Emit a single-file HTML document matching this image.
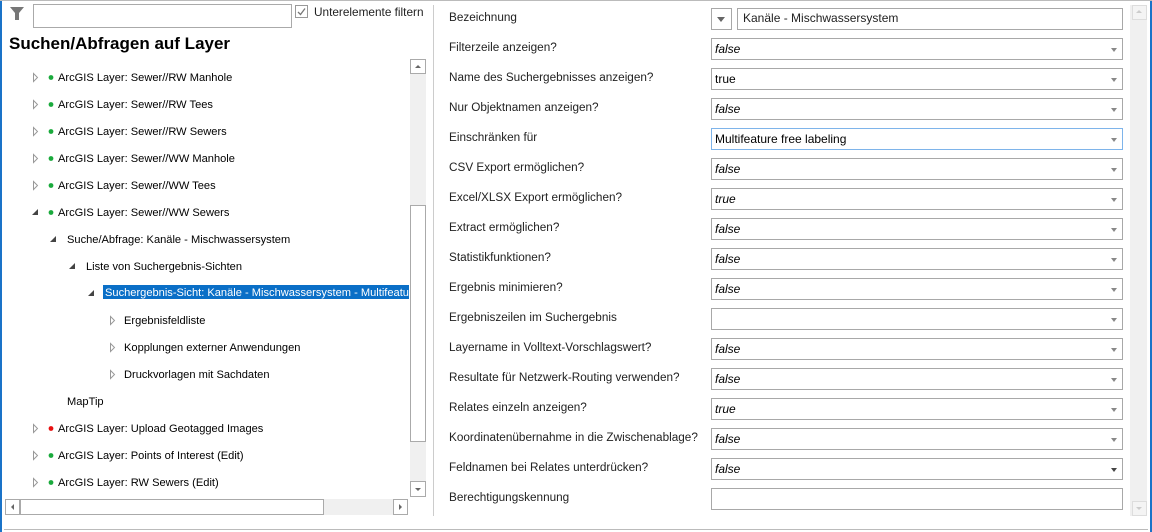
<!DOCTYPE html>
<html><head><meta charset="utf-8"><style>
*{margin:0;padding:0;box-sizing:border-box}
body{width:1152px;height:532px;background:#fff;position:relative;overflow:hidden;font-family:"Liberation Sans",sans-serif;font-size:12px;color:#000}
.a{position:absolute}
.t{position:absolute;white-space:nowrap;line-height:14px;font-size:11.1px}
.tr .t{margin-top:1px}
.box{position:absolute;left:711px;width:412px;height:22px;border:1px solid #a8a8a8;background:#fff}
.box span{position:absolute;left:3px;top:3px;line-height:14px}
.box i{font-style:italic}
.dd{position:absolute;right:5px;top:9px;border-left:3px solid transparent;border-right:3px solid transparent;border-top:4px solid #888}
.lbl{position:absolute;left:449px;white-space:nowrap;line-height:14px;color:#222;font-size:11.75px;margin-top:1px}
</style></head><body>
<div class="a" style="left:0;top:0;width:2px;height:532px;background:#1a73c8"></div>
<div class="a" style="right:0;top:0;width:2px;height:532px;background:#1a73c8"></div>
<div class="a" style="left:0;top:0;width:1152px;height:1px;background:#bbb"></div>
<div class="a" style="left:4px;top:529px;width:1144px;height:1px;background:#bbb"></div>
<svg class="a" style="left:9px;top:6px" width="16" height="16"><path d="M1 1H15L10 7V14H6V7Z" fill="#777"/></svg>
<div class="a" style="left:33px;top:4px;width:259px;height:24px;border:1px solid #aaa"></div>
<div class="a" style="left:295px;top:5px;width:13px;height:13px;border:1px solid #999"></div>
<svg class="a" style="left:296px;top:6px" width="11" height="11"><path d="M2 6L4.5 8.5L9 2.5" stroke="#777" stroke-width="1.3" fill="none"/></svg>
<div class="t" style="left:314px;top:5px;color:#222;font-size:11.8px">Unterelemente filtern</div>
<div class="t" style="left:9px;top:34px;font-size:17px;font-weight:bold;line-height:20px">Suchen/Abfragen auf Layer</div>
<div class="tr">
<div class="t" style="left:58px;top:70px">ArcGIS Layer: Sewer//RW Manhole</div>
<div class="t" style="left:58px;top:97px">ArcGIS Layer: Sewer//RW Tees</div>
<div class="t" style="left:58px;top:124px">ArcGIS Layer: Sewer//RW Sewers</div>
<div class="t" style="left:58px;top:151px">ArcGIS Layer: Sewer//WW Manhole</div>
<div class="t" style="left:58px;top:178px">ArcGIS Layer: Sewer//WW Tees</div>
<div class="t" style="left:58px;top:205px">ArcGIS Layer: Sewer//WW Sewers</div>
<div class="t" style="left:67px;top:232px">Suche/Abfrage: Kanäle - Mischwassersystem</div>
<div class="t" style="left:86px;top:259px">Liste von Suchergebnis-Sichten</div>
<div class="a" style="left:103px;top:285px;width:306px;height:14px;background:#0a6fc7"></div>
<div class="t" style="left:105px;top:285px;width:304px;overflow:hidden;color:#fff">Suchergebnis-Sicht: Kanäle - Mischwassersystem - Multifeature free labeling</div>
<div class="t" style="left:124px;top:313px">Ergebnisfeldliste</div>
<div class="t" style="left:124px;top:340px">Kopplungen externer Anwendungen</div>
<div class="t" style="left:124px;top:367px">Druckvorlagen mit Sachdaten</div>
<div class="t" style="left:67px;top:394px">MapTip</div>
<div class="t" style="left:58px;top:421px">ArcGIS Layer: Upload Geotagged Images</div>
<div class="t" style="left:58px;top:448px">ArcGIS Layer: Points of Interest (Edit)</div>
<div class="t" style="left:58px;top:475px">ArcGIS Layer: RW Sewers (Edit)</div>
</div>
<svg class="a" style="left:0;top:60px" width="130" height="440">
<g fill="#fff" stroke="#999" stroke-width="1">
<path d="M33.5 13.5V21.5L37.5 17.5Z"/><path d="M33.5 40.5V48.5L37.5 44.5Z"/><path d="M33.5 67.5V75.5L37.5 71.5Z"/>
<path d="M33.5 94.5V102.5L37.5 98.5Z"/><path d="M33.5 121.5V129.5L37.5 125.5Z"/>
<path d="M110.5 256.5V264.5L114.5 260.5Z"/><path d="M110.5 283.5V291.5L114.5 287.5Z"/><path d="M110.5 310.5V318.5L114.5 314.5Z"/>
<path d="M33.5 364.5V372.5L37.5 368.5Z"/><path d="M33.5 391.5V399.5L37.5 395.5Z"/><path d="M33.5 418.5V426.5L37.5 422.5Z"/>
</g>
<g fill="#444">
<path d="M32 155H38V149Z"/><path d="M50 182H56V176Z"/><path d="M69 209H75V203Z"/><path d="M88 236H94V230Z"/>
</g>
<g fill="#1aaa3c">
<circle cx="51" cy="17.5" r="2.4"/><circle cx="51" cy="44.5" r="2.4"/><circle cx="51" cy="71.5" r="2.4"/><circle cx="51" cy="98.5" r="2.4"/><circle cx="51" cy="125.5" r="2.4"/><circle cx="51" cy="152.5" r="2.4"/><circle cx="51" cy="395.5" r="2.4"/><circle cx="51" cy="422.5" r="2.4"/>
</g>
<circle cx="51" cy="368.5" r="2.4" fill="#e81010"/>
</svg>
<div class="a" style="left:410px;top:59px;width:16px;height:438px;background:#f0f0f0"></div>
<div class="a" style="left:410px;top:59px;width:16px;height:15px;border:1px solid #aaa;background:#fff"></div>
<div class="a" style="left:415px;top:65px;border-left:3px solid transparent;border-right:3px solid transparent;border-bottom:3px solid #666"></div>
<div class="a" style="left:410px;top:205px;width:16px;height:237px;border:1px solid #aaa;background:#fff"></div>
<div class="a" style="left:410px;top:481px;width:16px;height:16px;border:1px solid #aaa;background:#fff"></div>
<div class="a" style="left:415px;top:488px;border-left:3px solid transparent;border-right:3px solid transparent;border-top:3px solid #666"></div>
<div class="a" style="left:5px;top:499px;width:403px;height:16px;background:#f0f0f0"></div>
<div class="a" style="left:5px;top:499px;width:15px;height:16px;border:1px solid #aaa;background:#fff"></div>
<div class="a" style="left:11px;top:504px;border-top:3px solid transparent;border-bottom:3px solid transparent;border-right:3px solid #666"></div>
<div class="a" style="left:20px;top:499px;width:304px;height:16px;border:1px solid #aaa;background:#fff"></div>
<div class="a" style="left:393px;top:499px;width:15px;height:16px;border:1px solid #aaa;background:#fff"></div>
<div class="a" style="left:399px;top:504px;border-top:3px solid transparent;border-bottom:3px solid transparent;border-left:3px solid #666"></div>
<div class="a" style="left:433px;top:5px;width:1px;height:511px;background:#ccc"></div>
<div class="lbl" style="top:10px">Bezeichnung</div>
<div class="lbl" style="top:40px">Filterzeile anzeigen?</div>
<div class="lbl" style="top:70px">Name des Suchergebnisses anzeigen?</div>
<div class="lbl" style="top:100px">Nur Objektnamen anzeigen?</div>
<div class="lbl" style="top:130px">Einschränken für</div>
<div class="lbl" style="top:160px">CSV Export ermöglichen?</div>
<div class="lbl" style="top:190px">Excel/XLSX Export ermöglichen?</div>
<div class="lbl" style="top:220px">Extract ermöglichen?</div>
<div class="lbl" style="top:250px">Statistikfunktionen?</div>
<div class="lbl" style="top:280px">Ergebnis minimieren?</div>
<div class="lbl" style="top:310px">Ergebniszeilen im Suchergebnis</div>
<div class="lbl" style="top:340px">Layername in Volltext-Vorschlagswert?</div>
<div class="lbl" style="top:370px">Resultate für Netzwerk-Routing verwenden?</div>
<div class="lbl" style="top:400px">Relates einzeln anzeigen?</div>
<div class="lbl" style="top:430px">Koordinatenübernahme in die Zwischenablage?</div>
<div class="lbl" style="top:460px">Feldnamen bei Relates unterdrücken?</div>
<div class="lbl" style="top:490px">Berechtigungskennung</div>
<div class="a" style="left:711px;top:8px;width:21px;height:22px;border:1px solid #a8a8a8"></div>
<div class="a" style="left:717px;top:17px;border-left:4px solid transparent;border-right:4px solid transparent;border-top:5px solid #666"></div>
<div class="a" style="left:737px;top:8px;width:386px;height:22px;border:1px solid #a8a8a8"></div>
<div class="t" style="left:743px;top:11px;color:#222;font-size:12px">Kanäle - Mischwassersystem</div>
<div class="box" style="top:38px"><span><i>false</i></span><b class="dd"></b></div>
<div class="box" style="top:68px"><span>true</span><b class="dd"></b></div>
<div class="box" style="top:98px"><span><i>false</i></span><b class="dd"></b></div>
<div class="box" style="top:128px;border-color:#7eb4ea"><span>Multifeature free labeling</span><b class="dd"></b></div>
<div class="box" style="top:158px"><span><i>false</i></span><b class="dd"></b></div>
<div class="box" style="top:188px"><span><i>true</i></span><b class="dd"></b></div>
<div class="box" style="top:218px"><span><i>false</i></span><b class="dd"></b></div>
<div class="box" style="top:248px"><span><i>false</i></span><b class="dd"></b></div>
<div class="box" style="top:278px"><span><i>false</i></span><b class="dd"></b></div>
<div class="box" style="top:308px"><b class="dd"></b></div>
<div class="box" style="top:338px"><span><i>false</i></span><b class="dd"></b></div>
<div class="box" style="top:368px"><span><i>false</i></span><b class="dd"></b></div>
<div class="box" style="top:398px"><span><i>true</i></span><b class="dd"></b></div>
<div class="box" style="top:428px"><span><i>false</i></span><b class="dd"></b></div>
<div class="box" style="top:458px"><span><i>false</i></span><b class="dd" style="border-top-color:#444"></b></div>
<div class="box" style="top:488px"></div>
<div class="a" style="left:1130px;top:5px;width:17px;height:511px;background:#f0f0f0"></div>
<div class="a" style="left:1132px;top:5px;width:15px;height:15px;border:1px solid #ddd;background:#f4f4f4"></div>
<div class="a" style="left:1136px;top:10px;border-left:3px solid transparent;border-right:3px solid transparent;border-bottom:3px solid #ccc"></div>
<div class="a" style="left:1132px;top:501px;width:15px;height:15px;border:1px solid #ddd;background:#f4f4f4"></div>
<div class="a" style="left:1136px;top:507px;border-left:3px solid transparent;border-right:3px solid transparent;border-top:3px solid #ccc"></div>
</body></html>
